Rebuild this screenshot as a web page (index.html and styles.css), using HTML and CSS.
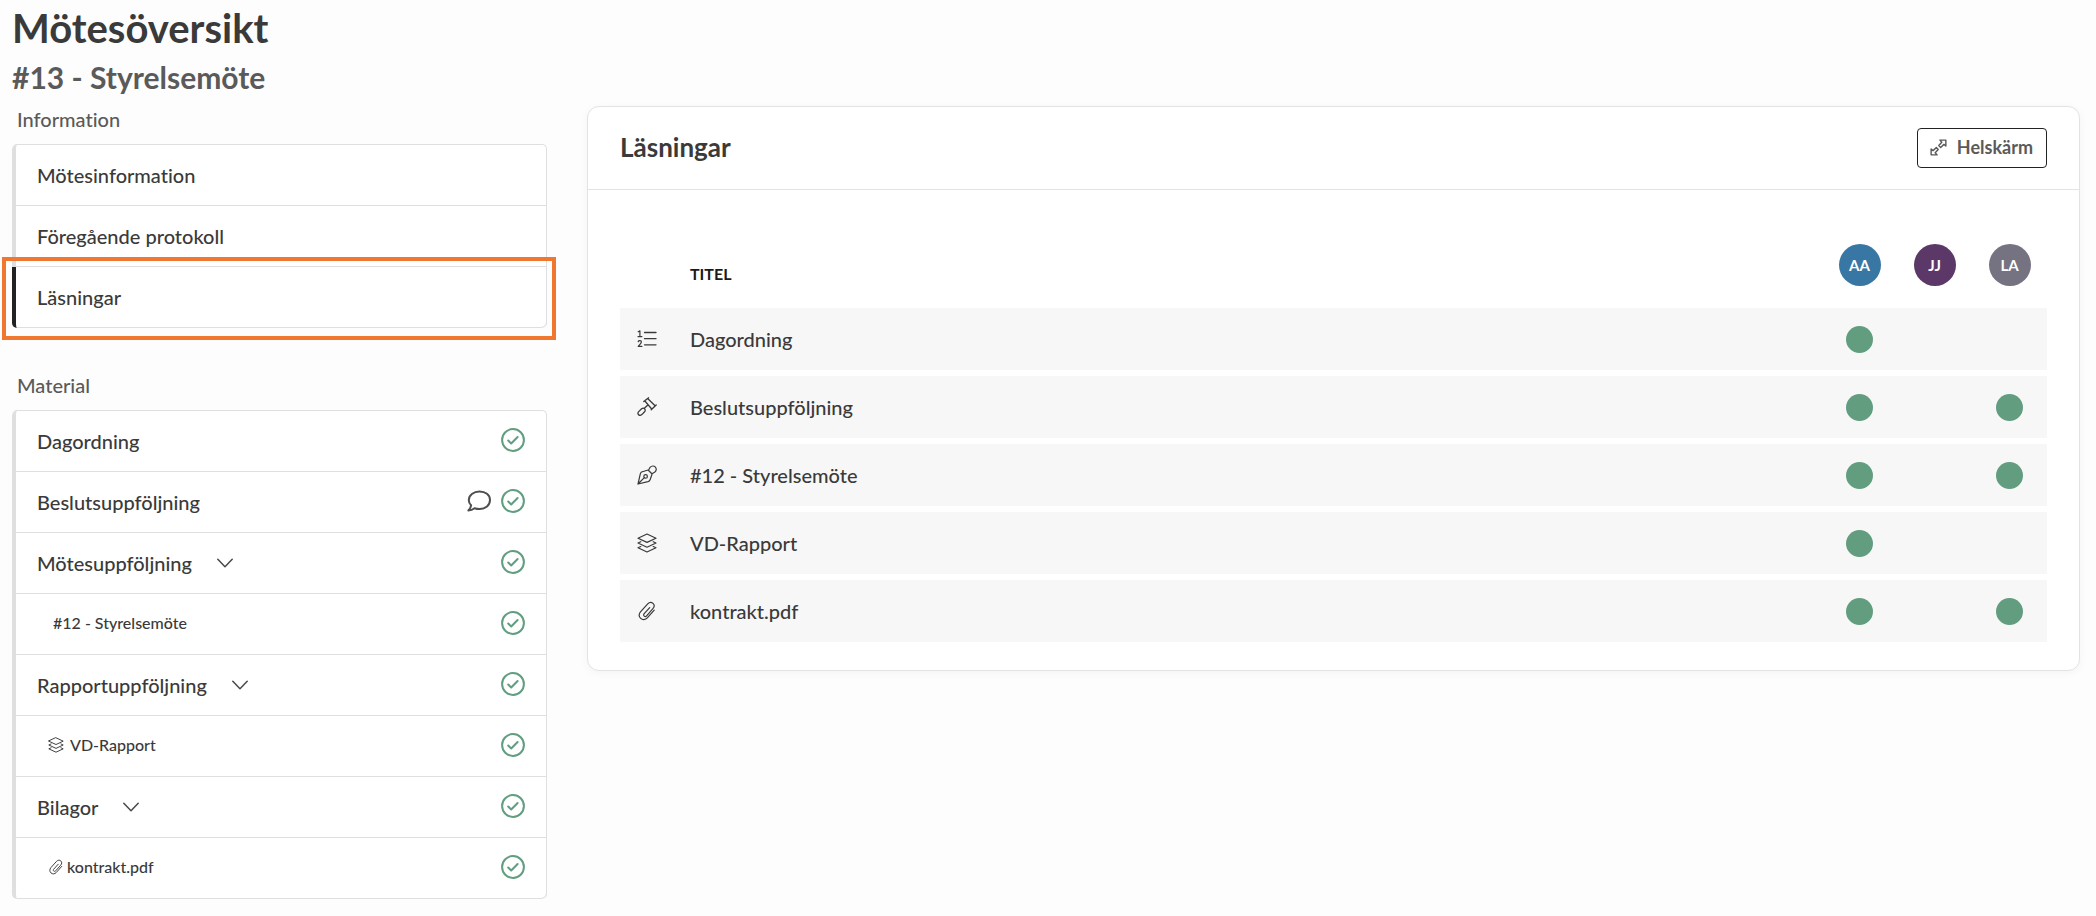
FILE: index.html
```html
<!DOCTYPE html>
<html lang="sv">
<head>
<meta charset="utf-8">
<meta name="viewport" content="width=device-width, initial-scale=1">
<title>Mötesöversikt</title>
<link rel="stylesheet" href="styles.css">
</head>
<body>
<svg class="sprite" aria-hidden="true">
  <symbol id="check" viewBox="0 0 24 24"><circle cx="12" cy="12" r="10.9" stroke-width="2"/><path d="M7.2 12.5l3 3 6.4-6.5" stroke-width="2"/></symbol>
  <symbol id="comment" viewBox="0 0 24 24"><path d="M12.500 2.500C6.500 2.500 1.800 6.200 1.800 11c0 2 .8 3.900 2.300 5.300-.3 1.800-1.200 3.500-2.700 5.100 2.300 0 4.400-.8 6.100-2.200 1.500.5 3.200.8 5 .8 6 0 10.500-3.800 10.500-9S18.500 2.500 12.500 2.500z" stroke-width="2"/></symbol>
  <symbol id="chevron" viewBox="0 0 16 16"><path d="M.8 4.200L8 11.800l7.200-7.600" stroke-width="1.500"/></symbol>
  <symbol id="layers" viewBox="0 0 20 20"><path d="M10 1l9 4.200-9 4.200-9-4.200zM3.800 8.700L1 10l9 4.200 9-4.200-2.800-1.300M3.800 13.500L1 14.800 10 19l9-4.200-2.800-1.300" stroke-width="1.200"/></symbol>
  <symbol id="clip" viewBox="0 0 20 20"><path d="M12.700 6.600l-5.500 6.100c-.8.900-.7 1.800 0 2.400s1.700.5 2.400-.3l6.300-7.100c1.700-1.900 1.500-4 .1-5.300s-3.600-1.300-5.300.5l-7 7.800c-2 2.300-1.800 5 0 6.700s4.700 1.600 6.600-.5l6.900-7.700" stroke-width="1.200"/></symbol>
  <symbol id="numbered" viewBox="0 0 20 20"><path d="M1.200 2.800l1.700-.9v5.600M1 7.600h3.900M1.200 12.700c.5-1.500 3.200-1.300 3.200.4 0 1.300-1.600 2.300-3.200 4.300h3.700" stroke-width="1.200"/><path d="M7.500 3.500H19M7.500 9.700H19M7.500 15.800H19" stroke-width="1.300"/></symbol>
  <symbol id="gavel" viewBox="0 0 20 20"><path d="M6.800 4.600L11.600.8M14.200 12.800L19.200 8M7.900 4l6.800 8M10.900 1.700l7.200 7M10.900 8l-3.300 3M7.500 11.700c-.9-.9-2-.7-2.900.1l-2.900 2.800c-2 2.100.7 5.100 3.100 3l2.800-2.800c.9-.9.8-2.200-.1-3.100z" stroke-width="1.300"/></symbol>
  <symbol id="pen" viewBox="0 0 20 20"><path d="M1 19l2.300-10.200c.3-1.200 1-1.800 2.100-2.100l5.700-1.700 4 4-2 5.700c-.4 1.100-1 1.700-2.100 2zM1 19l6.300-6.300M11.600 5l1.500-2.700c1.500-1.700 4-1.700 5.300-.2s1.100 3.600-.5 4.900L15 8.700" stroke-width="1.200"/><circle cx="8.600" cy="11.400" r="1.800" stroke-width="1.200"/></symbol>
  <symbol id="expand" viewBox="0 0 18 18"><path d="M10.500 1.200h6.300v6.300l-2.100-1.800-3.400 3.200-2-2 3.200-3.400zM7.500 16.800H1.200v-6.300l2.100 1.800 3.400-3.200 2 2-3.200 3.400z" stroke-width="1.500"/></symbol>
</svg>

<header class="page-header">
  <h1 class="page-title">Mötesöversikt</h1>
  <h2 class="page-subtitle">#13 - Styrelsemöte</h2>
</header>

<div class="layout">
  <nav class="sidebar" aria-label="Mötesinnehåll">
    <section class="group">
      <h3 class="group-label">Information</h3>
      <ul class="menu">
        <li class="menu-item"><a class="menu-link" href="#">Mötesinformation</a></li>
        <li class="menu-item"><a class="menu-link" href="#">Föregående protokoll</a></li>
        <li class="menu-item is-active"><a class="menu-link" href="#" aria-current="page">Läsningar</a></li>
      </ul>
    </section>
    <section class="group">
      <h3 class="group-label">Material</h3>
      <ul class="menu">
        <li class="menu-item"><a class="menu-link" href="#">Dagordning</a><span class="status"><svg class="icon icon-check"><use href="#check"/></svg></span></li>
        <li class="menu-item"><a class="menu-link" href="#">Beslutsuppföljning</a><span class="status"><svg class="icon icon-comment"><use href="#comment"/></svg><svg class="icon icon-check"><use href="#check"/></svg></span></li>
        <li class="menu-item"><a class="menu-link" href="#">Mötesuppföljning</a><button class="toggle" type="button" aria-label="Fäll ihop"><svg class="icon icon-chevron"><use href="#chevron"/></svg></button><span class="status"><svg class="icon icon-check"><use href="#check"/></svg></span></li>
        <li class="menu-item is-child"><a class="menu-link plain" href="#">#12 - Styrelsemöte</a><span class="status"><svg class="icon icon-check"><use href="#check"/></svg></span></li>
        <li class="menu-item"><a class="menu-link" href="#">Rapportuppföljning</a><button class="toggle" type="button" aria-label="Fäll ihop"><svg class="icon icon-chevron"><use href="#chevron"/></svg></button><span class="status"><svg class="icon icon-check"><use href="#check"/></svg></span></li>
        <li class="menu-item is-child"><a class="menu-link" href="#"><svg class="icon icon-small"><use href="#layers"/></svg>VD-Rapport</a><span class="status"><svg class="icon icon-check"><use href="#check"/></svg></span></li>
        <li class="menu-item"><a class="menu-link" href="#">Bilagor</a><button class="toggle" type="button" aria-label="Fäll ihop"><svg class="icon icon-chevron"><use href="#chevron"/></svg></button><span class="status"><svg class="icon icon-check"><use href="#check"/></svg></span></li>
        <li class="menu-item is-child"><a class="menu-link narrow" href="#"><svg class="icon icon-small"><use href="#clip"/></svg>kontrakt.pdf</a><span class="status"><svg class="icon icon-check"><use href="#check"/></svg></span></li>
      </ul>
    </section>
  </nav>

  <main class="card">
    <div class="card-header">
      <h2 class="card-title">Läsningar</h2>
      <button class="fullscreen" type="button"><svg class="icon icon-expand"><use href="#expand"/></svg>Helskärm</button>
    </div>
    <div class="card-body">
      <table class="readings">
        <thead>
          <tr>
            <th class="col-icon"></th>
            <th class="col-title" scope="col">TITEL</th>
            <th class="col-user" scope="col"><span class="avatar blue">AA</span></th>
            <th class="col-user" scope="col"><span class="avatar purple">JJ</span></th>
            <th class="col-user" scope="col"><span class="avatar gray">LA</span></th>
          </tr>
        </thead>
        <tbody>
          <tr><td class="col-icon"><svg class="icon icon-row"><use href="#numbered"/></svg></td><td>Dagordning</td><td class="col-user"><span class="dot"></span></td><td class="col-user"></td><td class="col-user"></td></tr>
          <tr><td class="col-icon"><svg class="icon icon-row"><use href="#gavel"/></svg></td><td>Beslutsuppföljning</td><td class="col-user"><span class="dot"></span></td><td class="col-user"></td><td class="col-user"><span class="dot"></span></td></tr>
          <tr><td class="col-icon"><svg class="icon icon-row"><use href="#pen"/></svg></td><td>#12 - Styrelsemöte</td><td class="col-user"><span class="dot"></span></td><td class="col-user"></td><td class="col-user"><span class="dot"></span></td></tr>
          <tr><td class="col-icon"><svg class="icon icon-row"><use href="#layers"/></svg></td><td>VD-Rapport</td><td class="col-user"><span class="dot"></span></td><td class="col-user"></td><td class="col-user"></td></tr>
          <tr><td class="col-icon"><svg class="icon icon-row"><use href="#clip"/></svg></td><td>kontrakt.pdf</td><td class="col-user"><span class="dot"></span></td><td class="col-user"></td><td class="col-user"><span class="dot"></span></td></tr>
        </tbody>
      </table>
    </div>
  </main>
</div>
</body>
</html>
```
FILE: styles.css
```css
* {
  box-sizing: border-box;
}

body {
  margin: 0;
  padding: 6px 16px 16px 12px;
  background: #fdfdfd;
  color: #3a3a3a;
  font-family: Lato, "Noto Sans", sans-serif;
  font-size: 20px;
  font-weight: 500;
  font-variant-ligatures: none;
  line-height: 28px;
}

h1, h2, h3, ul {
  margin: 0;
  padding: 0;
}

button {
  font: inherit;
  cursor: pointer;
}

.sprite {
  position: absolute;
  width: 0;
  height: 0;
}

.icon {
  display: block;
  flex: none;
  fill: none;
  stroke: currentColor;
  stroke-linecap: round;
  stroke-linejoin: round;
}

.page-title {
  font-size: 40px;
  font-weight: 700;
  line-height: 44px;
}

.page-subtitle {
  margin: 9px 0 11px;
  color: #5a5a5a;
  font-size: 30px;
  font-weight: 700;
  line-height: 36px;
}

.layout {
  display: grid;
  grid-template-columns: minmax(0, 535fr) minmax(0, 1493fr);
  gap: 40px;
  align-items: start;
}

.sidebar {
  display: grid;
  gap: 44px;
}

.group-label {
  margin: 0 0 12px 5px;
  color: #5a5a5a;
  font-size: 20px;
  font-weight: 500;
  line-height: 26px;
}

.menu {
  list-style: none;
  background: #fff;
  border: 1px solid #dfdfdf;
  border-width: 1px 1px 0 0;
  border-radius: 5px;
}

.menu-item {
  position: relative;
  display: flex;
  align-items: center;
  height: 61px;
  padding: 0 21px 0 21px;
  border-left: 4px solid #dfdfdf;
  box-shadow: inset 0 -1px #dfdfdf;
}

.menu-item:first-child {
  border-top-left-radius: 5px;
}

.menu-item:last-child {
  border-radius: 0 0 5px 5px;
}

.menu-item.is-active {
  border-left-color: #222;
}

.menu-item.is-active::after {
  content: "";
  position: absolute;
  inset: -10px -10px -12px -14px;
  border: 4px solid #f0772f;
  pointer-events: none;
}

.menu-link {
  display: flex;
  align-items: center;
  gap: 6px;
  padding-bottom: 2px;
  color: inherit;
  text-decoration: none;
}

.is-child .menu-link {
  padding: 0 0 4px 11px;
  font-size: 16px;
}

.is-child .menu-link.plain {
  padding-left: 16px;
}

.is-child .menu-link.narrow {
  gap: 3px;
}

.toggle {
  margin-left: 18px;
  padding: 6px 7px 8px;
  border: 0;
  background: none;
  color: #4a4a4a;
}

.status {
  display: flex;
  align-items: center;
  gap: 10px;
  margin-left: auto;
  padding-bottom: 4px;
}

.icon-check {
  width: 24px;
  height: 24px;
  color: #619e80;
}

.icon-comment {
  width: 24px;
  height: 24px;
  color: #4f4f4f;
}

.icon-chevron {
  width: 16px;
  height: 16px;
}

.icon-small {
  width: 16px;
  height: 16px;
}

.card {
  background: #fff;
  border: 1px solid #e3e3e3;
  border-radius: 12px;
  box-shadow: 0 2px 10px rgba(0, 0, 0, 0.04);
}

.card-header {
  display: flex;
  align-items: center;
  justify-content: space-between;
  padding: 21px 32px;
  border-bottom: 1px solid #e3e3e3;
}

.card-title {
  padding-bottom: 2px;
  font-size: 26px;
  font-weight: 700;
  line-height: 32px;
}

.fullscreen {
  display: flex;
  align-items: center;
  gap: 10px;
  height: 40px;
  padding: 0 13px 2px 12px;
  border: 1px solid #222;
  border-radius: 4px;
  background: #fff;
  color: #5a5a5a;
  font-size: 18px;
  font-weight: 700;
}

.icon-expand {
  width: 17px;
  height: 17px;
}

.card-body {
  padding: 40px 32px 28px;
}

.readings {
  width: 100%;
  border-spacing: 0;
  table-layout: fixed;
}

.readings th {
  height: 72px;
  padding: 0;
  vertical-align: top;
  text-align: left;
}

.readings th.col-title {
  padding-top: 30px;
  color: #1a1a1a;
  font-size: 16px;
  font-weight: 700;
}

.readings td {
  height: 68px;
  padding: 6px 0 0;
  background: linear-gradient(#f7f7f7, #f7f7f7) 0 100% / 100% 62px no-repeat;
}

.readings .col-icon {
  width: 70px;
  padding-left: 17px;
}

.readings .col-user {
  width: 75px;
}

.avatar {
  display: grid;
  place-items: center;
  width: 42px;
  height: 42px;
  margin: 14px auto 0;
  border-radius: 50%;
  color: #fff;
  font-size: 15px;
  font-weight: 700;
}

.blue {
  background: #3876a3;
}

.purple {
  background: #5c3868;
}

.gray {
  background: #757381;
}

.dot {
  display: block;
  width: 27px;
  height: 27px;
  margin: 0 auto;
  border-radius: 50%;
  background: #629d80;
}

.icon-row {
  width: 20px;
  height: 20px;
}
```
